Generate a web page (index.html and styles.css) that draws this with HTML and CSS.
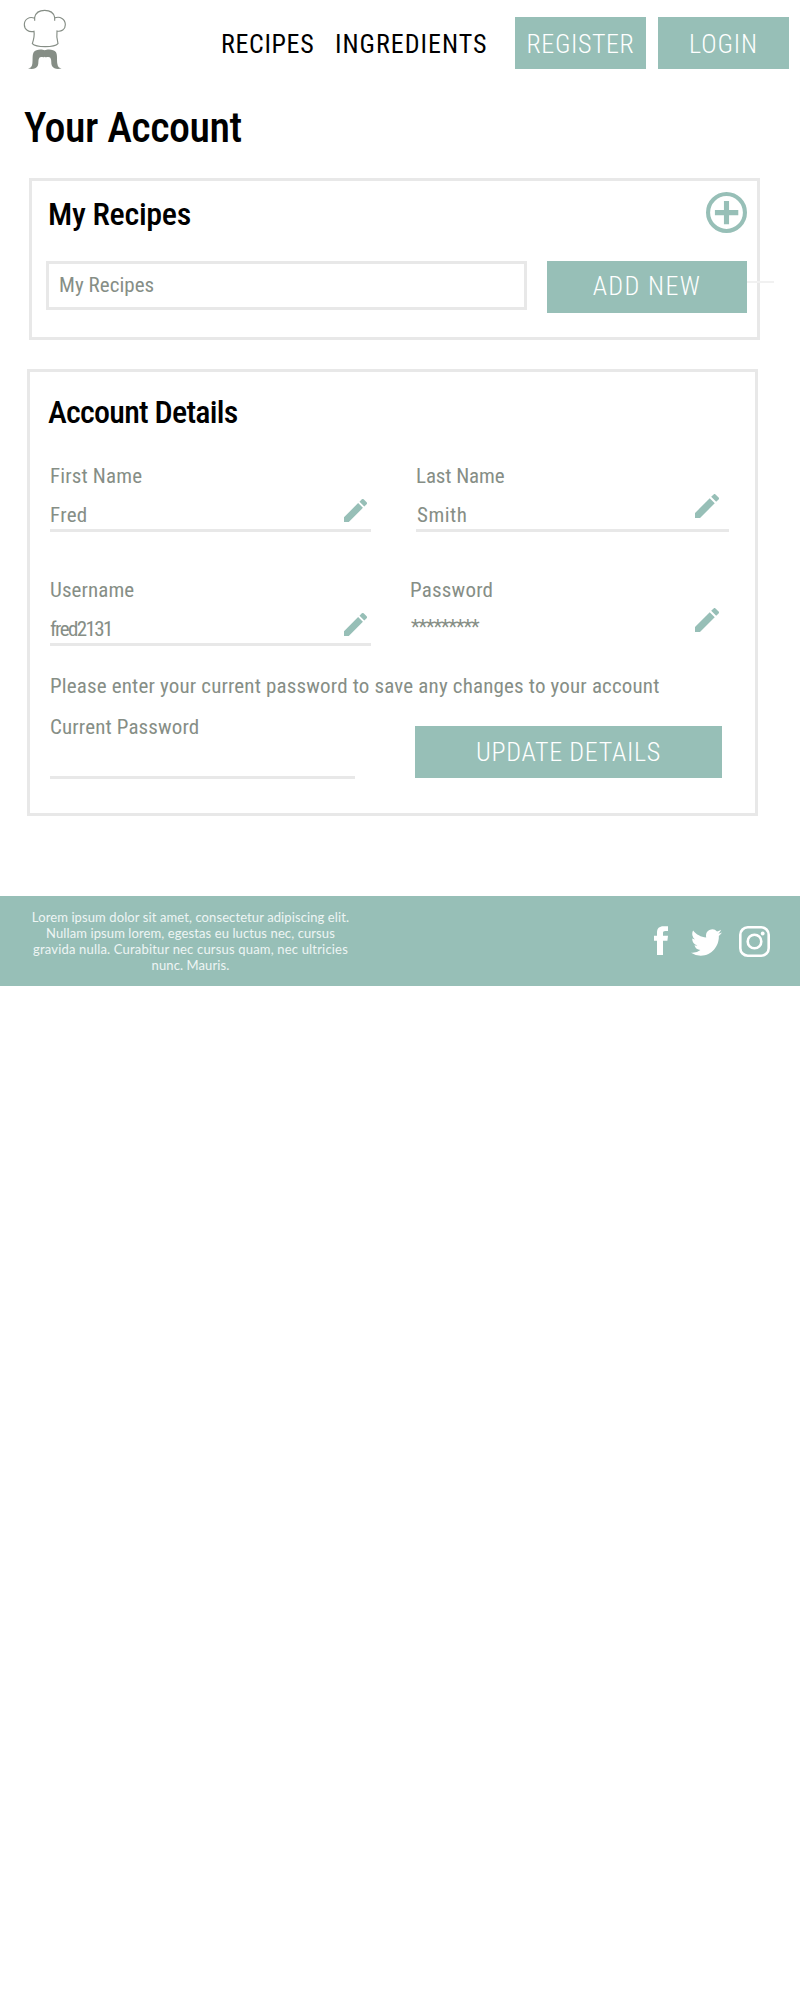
FILE: index.html
```html
<!DOCTYPE html>
<html lang="en">
<head>
<meta charset="utf-8">
<title>Your Account</title>
<link rel="stylesheet" href="styles.css">
</head>
<body>
<svg width="0" height="0" class="defs" aria-hidden="true">
  <symbol id="pencil" viewBox="3 3 18 18"><path d="M3 17.25V21h3.75L17.81 9.94l-3.75-3.75L3 17.25zM20.71 7.04a1 1 0 0 0 0-1.41l-2.34-2.34a1 1 0 0 0-1.41 0l-1.83 1.83 3.75 3.75 1.83-1.83z"/></symbol>
</svg>
<header class="header">
  <svg class="logo" viewBox="69 27 129 183" role="img" aria-label="Chef hat and moustache">
    <path class="hat" d="M104 62V52C107 38 120 31 134 31S161 38 164 52V62M164 54C180 47 196 58 196 74C196 88 184 96 171 93C169 107 171 119 174 131C163 143 108 143 97 131C101 119 104 107 102 94C86 98 73 88 73 74C73 58 88 48 104 55"/>
    <path class="moustache" d="M134 151C126 147 107 147 101 157C96 166 99 181 97 191C96 201 91 204 84 205C95 209 108 207 113 198C117 190 113 181 118 173C123 168 130 174 134 170C138 174 146 168 151 173C156 181 152 190 156 198C161 207 174 209 185 205C178 204 173 201 172 191C170 181 173 166 168 157C162 147 142 147 134 151Z"/>
  </svg>
  <nav class="nav">
    <a class="link recipes">RECIPES</a>
    <a class="link ingredients">INGREDIENTS</a>
    <a class="button register">REGISTER</a>
    <a class="button login">LOGIN</a>
  </nav>
</header>
<main>
  <h1 class="title">Your Account</h1>
  <section class="panel recipes-panel">
    <div class="panel-head">
      <h2 class="heading">My Recipes</h2>
      <svg class="plus" viewBox="0 0 40 40"><circle cx="20" cy="20" r="18"/><path d="M20 8.7v22.8M8.7 20.1h22.8"/></svg>
    </div>
    <div class="add-row">
      <div class="select">My Recipes</div>
      <div class="button add">ADD NEW</div>
      <span class="tail"></span>
    </div>
  </section>
  <section class="panel details-panel">
    <h2 class="heading details-heading">Account Details</h2>
    <div class="fields">
      <div class="field">
        <div class="label first">First Name</div>
        <div class="value"><span class="fred">Fred</span><svg class="pencil"><use href="#pencil"/></svg></div>
      </div>
      <div class="field right">
        <div class="label last">Last Name</div>
        <div class="value"><span class="smith">Smith</span><svg class="pencil raised"><use href="#pencil"/></svg></div>
      </div>
      <div class="field">
        <div class="label">Username</div>
        <div class="value"><span class="user">fred2131</span><svg class="pencil"><use href="#pencil"/></svg></div>
      </div>
      <div class="field right plain">
        <div class="label pass">Password</div>
        <div class="value"><span class="stars">*********</span><svg class="pencil raised"><use href="#pencil"/></svg></div>
      </div>
    </div>
    <p class="note">Please enter your current password to save any changes to your account</p>
    <div class="confirm">
      <div class="current">Current Password</div>
      <div class="button update">UPDATE DETAILS</div>
    </div>
  </section>
</main>
<footer class="footer">
  <p class="blurb"><span>Lorem ipsum dolor sit amet, consectetur adipiscing elit.</span><span>Nullam ipsum lorem, egestas eu luctus nec, cursus</span><span class="wide">gravida nulla. Curabitur nec cursus quam, nec ultricies</span><span>nunc. Mauris.</span></p>
  <div class="social">
    <svg class="facebook" viewBox="0 0 14 29"><path d="M3 29V14.7H0V9.7h3V6.6C3 2.3 5.2.2 9.5.2H14v4.7h-2.8C9.5 4.9 9 5.6 9 7v2.7h5l-.6 5H9V29z"/></svg>
    <svg class="twitter" viewBox="0 2 24 20" preserveAspectRatio="none"><path d="M23.95 4.57a10 10 0 0 1-2.82.77 4.96 4.96 0 0 0 2.16-2.72c-.95.55-2 .96-3.13 1.18a4.92 4.92 0 0 0-8.38 4.48C7.69 8.1 4.07 6.13 1.64 3.16a4.92 4.92 0 0 0 1.52 6.57 4.9 4.9 0 0 1-2.23-.61v.06a4.92 4.92 0 0 0 3.95 4.83 5 5 0 0 1-2.21.08 4.94 4.94 0 0 0 4.6 3.42A9.87 9.87 0 0 1 0 19.54a13.99 13.99 0 0 0 7.56 2.21c9.05 0 14-7.5 14-13.98 0-.21 0-.42-.02-.63a9.94 9.94 0 0 0 2.46-2.55z"/></svg>
    <svg class="instagram" viewBox="0 0 31 31"><rect x="1.3" y="1.3" width="28.4" height="28.4" rx="7.5"/><circle cx="15.5" cy="15.5" r="6.8"/><circle class="dot" cx="23.7" cy="7.5" r="1.9"/></svg>
  </div>
</footer>
</body>
</html>
```
FILE: styles.css
```css
* { box-sizing: border-box; }
body {
  margin: 0;
  background: #fff;
  color: #000;
  font-family: Roboto, "Liberation Sans", sans-serif;
  font-stretch: 75%;
}
h1, h2, p { margin: 0; font-weight: 500; }
.defs { position: absolute; }

.header { display: flex; height: 86px; padding: 9px 11px 0 23px; }
.logo { width: 43px; height: 61px; }
.hat { fill: none; stroke: #868e86; stroke-width: 3.5; }
.moustache { fill: #868e86; }
.nav { display: flex; margin: 8px 0 0 auto; font-size: 26px; line-height: 53px; }
.link { padding-top: 1px; }
.recipes { width: 114px; letter-spacing: .65px; }
.ingredients { width: 180px; letter-spacing: 1px; }
.button {
  height: 52px;
  background: #97bfb7;
  color: #fff;
  font-size: 26px;
  font-weight: 300;
  line-height: 54px;
  text-align: center;
}
.register { width: 131px; letter-spacing: .6px; }
.login { width: 131px; margin-left: 12px; letter-spacing: .9px; }

.title {
  height: 92px;
  padding: 17px 0 0 24px;
  font-size: 42px;
  line-height: 50px;
  letter-spacing: -.5px;
}

.panel { width: 731px; border: 3px solid #e8e8e8; }
.heading { font-size: 32px; line-height: 40px; letter-spacing: -.3px; }
.recipes-panel { height: 162px; margin-left: 29px; padding: 11px 0 0 14px; }
.panel-head { display: flex; justify-content: space-between; padding: 0 10px 0 2px; }
.panel-head .heading { padding-top: 2px; }
.plus { width: 41px; height: 41px; fill: none; stroke: #97bfb7; stroke-width: 4; }
.plus path { stroke-width: 5; }
.add-row { display: flex; margin-top: 27px; }
.select {
  flex: none;
  width: 481px;
  height: 49px;
  padding-left: 10px;
  border: 3px solid #e8e8e8;
  color: #868e86;
  font-size: 21px;
  line-height: 42px;
  letter-spacing: .05px;
}
.add { flex: none; width: 200px; margin-left: 20px; line-height: 51px; letter-spacing: 1.4px; }
.tail { flex: none; width: 27px; height: 2px; margin-top: 20px; background: #f1f1f1; }

.details-panel {
  height: 447px;
  margin: 29px 0 0 27px;
  padding: 20px 0 0 20px;
  color: #868e86;
  font-size: 21px;
  line-height: 30px;
}
.details-heading { margin-left: -2px; color: #000; letter-spacing: -.75px; }
.fields { display: grid; grid-template-columns: 321px 314px; column-gap: 44px; row-gap: 42px; margin-top: 28px; }
.field { height: 72px; letter-spacing: .1px; }
.label { height: 40px; padding-top: 1px; }
.first { letter-spacing: .15px; }
.last { margin-left: 1px; letter-spacing: -.1px; }
.pass { margin-left: -5px; letter-spacing: .2px; }
.value {
  display: flex;
  justify-content: space-between;
  height: 32px;
  padding-right: 4px;
  border-bottom: 3px solid #e8e8e8;
}
.right .value { padding-right: 10px; margin-left: 1px; }
.plain .value { border-color: transparent; }
.pencil { width: 23px; height: 23px; margin-top: -1px; fill: #97bfb7; }
.raised { width: 24px; height: 24px; margin-top: -6px; }
.fred { letter-spacing: .3px; }
.smith { margin-left: 1px; letter-spacing: .5px; }
.user { letter-spacing: -1.6px; }
.stars { margin: -2px 0 0 -5px; font-size: 20px; letter-spacing: -1.1px; }
.note { margin: 25px 0 0; font-weight: 400; letter-spacing: .16px; }
.confirm { display: flex; margin-top: 11px; }
.current { width: 305px; height: 67px; border-bottom: 3px solid #e8e8e8; letter-spacing: .13px; }
.update { width: 307px; margin: 14px 0 0 60px; line-height: 52px; letter-spacing: .7px; }

.footer {
  display: flex;
  justify-content: space-between;
  height: 90px;
  margin-top: 80px;
  padding: 0 30px 0 30px;
  background: #97bfb7;
  color: #fff;
}
.blurb {
  width: 321px;
  padding-top: 13px;
  font: 400 13px/16px Lato, sans-serif;
  letter-spacing: .1px;
  text-align: center;
}
.blurb span { display: block; color: #eef5f4; white-space: nowrap; }
.blurb .wide { letter-spacing: .18px; }
.social { display: flex; padding-top: 30px; fill: #fff; }
.facebook { width: 14px; height: 29px; }
.twitter { width: 31px; height: 27px; margin: 3px 17px 0 23px; }
.instagram { width: 31px; height: 31px; fill: none; stroke: #fff; stroke-width: 2.6; }
.dot { fill: #fff; stroke: none; }
```
